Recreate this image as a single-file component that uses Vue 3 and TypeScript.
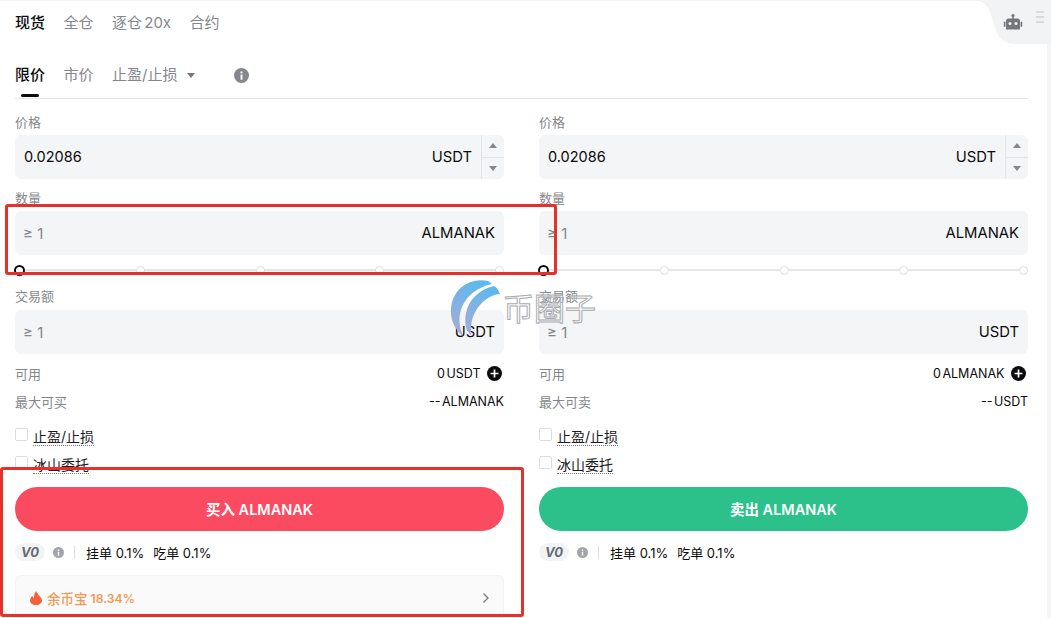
<script setup lang="ts">
interface Side {
  available: string
  maxLabel: string
  maxValue: string
  action: string
  kind: string
  earn: boolean
}

const sides: Side[] = [
  { available: '0 USDT', maxLabel: '最大可买', maxValue: '-- ALMANAK', action: '买入 ALMANAK', kind: 'buy', earn: true },
  { available: '0 ALMANAK', maxLabel: '最大可卖', maxValue: '-- USDT', action: '卖出 ALMANAK', kind: 'sell', earn: false },
]

const marginTabs = ['现货', '全仓', '逐仓 20x', '合约']
const sliderStops = [0, 1, 2, 3, 4]
</script>

<template>
  <div class="page">
    <div class="panel">
      <header class="top">
        <nav class="tabs">
          <span v-for="(tab, i) in marginTabs" :key="tab" class="tab" :class="{ active: i === 0 }">{{ tab }}</span>
        </nav>
        <div class="bot-tab">
          <svg class="bot-shape" width="81" height="44" viewBox="0 0 81 44">
            <path d="M0 0C10 0 16 2 20 12L25 28C28 38 34 44 46 44H81V0Z" fill="#f2f3f5" />
          </svg>
          <svg class="bot-icon" width="20" height="20" viewBox="0 0 20 20">
            <circle cx="10" cy="2.6" r="1.6" fill="#75777c" />
            <rect x="9.2" y="3" width="1.6" height="3" fill="#75777c" />
            <path d="M5.5 5.5h9a2.5 2.5 0 0 1 2.5 2.5v8.5H3V8a2.500 2.500 0 0 1 2.500-2.500Z" fill="#75777c" />
            <rect x="0.800" y="8.500" width="1.600" height="5.500" rx="0.800" fill="#75777c" />
            <rect x="17.600" y="8.500" width="1.600" height="5.500" rx="0.800" fill="#75777c" />
            <circle cx="7" cy="10.500" r="1.500" fill="#f2f3f5" />
            <circle cx="13" cy="10.500" r="1.500" fill="#f2f3f5" />
          </svg>
          <div class="menu-lines"><i></i><i></i><i></i></div>
        </div>
      </header>

      <div class="order-tabs">
        <span class="order-tab active">限价</span>
        <span class="order-tab">市价</span>
        <span class="order-tab">止盈/止损<i class="caret"></i></span>
        <svg class="order-info" width="15" height="15" viewBox="0 0 16 16">
          <circle cx="8" cy="8" r="8" fill="#85878c" />
          <rect x="7" y="7" width="2" height="5.500" fill="#fff" />
          <rect x="7" y="3.700" width="2" height="2" fill="#fff" />
        </svg>
      </div>

      <div class="columns">
        <section v-for="side in sides" :key="side.kind" class="column">
          <label class="field-label first">价格</label>
          <div class="input">
            <span class="value">0.02086</span>
            <span class="unit stepped">USDT</span>
            <div class="stepper">
              <span class="step"><i class="tri up"></i></span>
              <span class="step"><i class="tri down"></i></span>
            </div>
          </div>

          <label class="field-label">数量</label>
          <div class="input">
            <span class="placeholder">≥ 1</span>
            <span class="unit">ALMANAK</span>
          </div>

          <div class="slider">
            <span v-for="stop in sliderStops" :key="stop" class="stop" :class="{ current: stop === 0 }"></span>
          </div>

          <label class="field-label amount">交易额</label>
          <div class="input">
            <span class="placeholder">≥ 1</span>
            <span class="unit">USDT</span>
          </div>

          <div class="info-row available">
            <span>可用</span>
            <span class="info-value">
              {{ side.available }}
              <svg class="plus" width="15" height="15" viewBox="0 0 16 16">
                <circle cx="8" cy="8" r="8" fill="#0b0b0d" />
                <path d="M8 3.800v8.400M3.800 8h8.400" stroke="#fff" stroke-width="1.800" />
              </svg>
            </span>
          </div>
          <div class="info-row max">
            <span>{{ side.maxLabel }}</span>
            <span class="info-value">{{ side.maxValue }}</span>
          </div>

          <div class="check first-check"><i class="box"></i><span>止盈/止损</span></div>
          <div class="check"><i class="box"></i><span>冰山委托</span></div>

          <button class="action" :class="side.kind">{{ side.action }}</button>

          <div class="fees">
            <span class="level">V0</span>
            <svg class="fee-info" width="11" height="11" viewBox="0 0 16 16">
              <circle cx="8" cy="8" r="8" fill="#a3a5a9" />
              <rect x="7" y="7" width="2" height="5.500" fill="#fff" />
              <rect x="7" y="3.700" width="2" height="2" fill="#fff" />
            </svg>
            <i class="divider"></i>
            <span class="fee">挂单 0.1%</span>
            <span class="fee">吃单 0.1%</span>
          </div>

          <div v-if="side.earn" class="earn">
            <svg width="12" height="14" viewBox="0 0 12 14">
              <path d="M6.200 0C6.800 2.400 8.200 3.400 9.800 5.200 11.200 6.800 12 8 12 9.500 12 12 9.500 14 6 14S0 12 0 9.500C0 7.500 1.200 6 2.500 4.700 2.700 6 3.200 6.800 4 7.200 3.800 4.500 4.600 2 6.200 0Z" fill="#f4613c" />
            </svg>
            <span class="earn-name">余币宝</span>
            <span class="earn-rate">18.34%</span>
            <svg class="chevron" width="8" height="12" viewBox="0 0 8 12">
              <path d="M1.500 1.500 6 6l-4.500 4.500" fill="none" stroke="#75777c" stroke-width="1.300" />
            </svg>
          </div>
        </section>
      </div>
    </div>

    <div class="callout callout-amount"></div>
    <div class="callout callout-buy"></div>

    <div class="watermark">
      <svg width="52" height="58" viewBox="0 0 52 58">
        <defs>
          <linearGradient id="swoosh" x1="0.700" y1="0" x2="0.300" y2="1">
            <stop offset="0" stop-color="#5bb9ee" />
            <stop offset="1" stop-color="#a3acd8" />
          </linearGradient>
        </defs>
        <path d="M38 2C20-2 2 10 1 30 0 42 6 52 13 57 9 48 8 38 12 28 17 16 28 8 42 5Z" fill="url(#swoosh)" />
        <path d="M50 15C48 10 46 8 44 7 30 10 19 20 16 34 14 44 16 52 21 56 20 44 23 34 30 26 36 19 44 15 50 15Z" fill="url(#swoosh)" />
      </svg>
      <span class="watermark-text">币圈子</span>
    </div>
  </div>
</template>

<style>
html,
body {
  margin: 0;
  background: #f5f5f6;
}
</style>

<style scoped>
.page {
  position: relative;
  width: 1051px;
  height: 618px;
  overflow: hidden;
  background: #f5f5f6;
  font-family: Inter, "Noto Sans CJK SC", sans-serif;
  color: #0b0b0d;
}

.panel {
  width: 1047px;
  height: 618px;
  background: #fff;
  box-shadow: inset 0 1px 0 #f5f5f6;
}

.top {
  display: flex;
  justify-content: space-between;
  height: 44px;
  margin-right: -4px;
}

.tabs {
  display: flex;
  align-items: center;
  gap: 18.500px;
  padding: 0 0 2px 15px;
}

.tab {
  font-size: 15px;
  word-spacing: -2px;
  color: #85878c;
}

.tab.active {
  color: #0b0b0d;
  font-weight: 500;
}

.bot-tab {
  position: relative;
  width: 81px;
  height: 44px;
  flex: none;
}

.bot-shape {
  position: absolute;
  left: 0;
  top: 0;
}

.bot-icon {
  position: absolute;
  left: 33px;
  top: 13px;
}

.menu-lines {
  position: absolute;
  left: 66px;
  top: 11px;
  display: flex;
  flex-direction: column;
  gap: 3px;
}

.menu-lines i {
  display: block;
  width: 8px;
  height: 2px;
  background: #d8d9dc;
}

.order-tabs {
  display: flex;
  align-items: center;
  gap: 18.500px;
  margin: 0 19px 0 15px;
  height: 54px;
  border-bottom: 1px solid #e5e6e8;
}

.order-tab {
  position: relative;
  font-size: 15px;
  color: #85878c;
  line-height: 54px;
  height: 54px;
  top: 4px;
}

.order-tab.active {
  color: #0b0b0d;
  font-weight: 500;
}

.order-tab.active::after {
  content: "";
  position: absolute;
  left: 6px;
  top: 46px;
  width: 18px;
  height: 3px;
  border-radius: 2px;
  background: #0b0b0d;
}

.caret {
  display: inline-block;
  margin-left: 10px;
  vertical-align: 2px;
  border-left: 4px solid transparent;
  border-right: 4px solid transparent;
  border-top: 5px solid #75777c;
}

.order-info {
  margin: 8px 0 0 20px;
}

.columns {
  display: flex;
  gap: 35px;
  margin: 0 19px 0 15px;
}

.column {
  flex: 1;
  min-width: 0;
}

.field-label {
  display: block;
  height: 20px;
  margin-top: 9px;
  font-size: 13px;
  line-height: 20px;
  color: #85878c;
}

.field-label.first {
  margin-top: 13px;
}

.field-label.amount {
  margin-top: 11px;
}

.input {
  position: relative;
  display: flex;
  justify-content: space-between;
  align-items: center;
  height: 44px;
  padding: 0 9px;
  border-radius: 6px;
  background: #f4f5f6;
  font-size: 14px;
}

.field-label + .input {
  margin-top: 3px;
}

.field-label.amount + .input {
  margin-top: 4px;
}

.value {
  font-size: 14.500px;
  margin-top: -1px;
}

.placeholder {
  margin-left: -1px;
  color: #85878c;
  font-size: 15px;
}

.unit {
  font-size: 14.800px;
  margin-top: -1px;
}

.unit.stepped {
  margin-right: 23px;
}

.stepper {
  position: absolute;
  right: 0;
  top: 0;
  bottom: 0;
  width: 22px;
  display: flex;
  flex-direction: column;
  border-left: 1px solid #e3e4e6;
}

.step {
  flex: 1;
  display: flex;
  align-items: center;
  justify-content: center;
}

.step + .step {
  border-top: 1px solid #e3e4e6;
}

.tri {
  border-left: 4px solid transparent;
  border-right: 4px solid transparent;
}

.tri.up {
  border-bottom: 5px solid #85878c;
}

.tri.down {
  border-top: 5px solid #85878c;
}

.slider {
  display: flex;
  justify-content: space-between;
  align-items: center;
  height: 10px;
  margin-top: 10px;
  background: linear-gradient(#e5e6e8, #e5e6e8) center / 100% 2px no-repeat;
}

.stop {
  box-sizing: border-box;
  width: 9px;
  height: 9px;
  border: 1px solid #dedfe1;
  border-radius: 50%;
  background: #fff;
}

.stop.current {
  width: 11px;
  height: 11px;
  margin-left: -1px;
  border: 2px solid #0b0b0d;
}

.info-row {
  display: flex;
  justify-content: space-between;
  align-items: center;
  height: 20px;
  font-size: 13px;
  color: #85878c;
}

.info-row.available {
  margin-top: 9px;
}

.info-row.max {
  margin-top: 8px;
}

.info-value {
  display: flex;
  align-items: center;
  font-size: 12.500px;
  word-spacing: -2px;
  color: #0b0b0d;
  white-space: pre-wrap;
}

.plus {
  margin-left: 5px;
  margin-right: 2px;
}

.check {
  display: flex;
  align-items: center;
  gap: 5px;
  height: 20px;
  margin-top: 8px;
  font-size: 14px;
  color: #1c1c1f;
}

.check.first-check {
  margin-top: 16px;
}

.check span {
  border-bottom: 1px dotted #75777c;
  line-height: 17px;
}

.box {
  box-sizing: border-box;
  width: 13px;
  height: 13px;
  margin-top: -6px;
  border: 1px solid #dcdde0;
  border-radius: 2px;
}

.action {
  display: block;
  width: 100%;
  height: 44px;
  margin-top: 12px;
  padding: 0 0 2px;
  border: none;
  border-radius: 22px;
  font-family: inherit;
  font-size: 14.500px;
  font-weight: 600;
  color: #fff;
  cursor: pointer;
}

.action.buy {
  background: #fb4b61;
}

.action.sell {
  background: #2cc18a;
}

.fees {
  display: flex;
  align-items: center;
  height: 20px;
  margin-top: 11px;
  font-size: 13px;
}

.level {
  width: 30px;
  height: 18px;
  border-radius: 9px;
  background: #f2f3f5;
  color: #6a6c72;
  font-size: 13px;
  font-weight: 700;
  font-style: italic;
  line-height: 18px;
  text-align: center;
}

.fee-info {
  margin-left: 8px;
}

.divider {
  width: 1px;
  height: 13px;
  margin: 0 11px 0 10px;
  background: #dcdde0;
}

.fee + .fee {
  margin-left: 9px;
}

.earn {
  display: flex;
  align-items: center;
  gap: 5px;
  height: 44px;
  margin-top: 13px;
  padding: 0 14px 0 14px;
  border: 1px solid #f2f3f5;
  border-radius: 6px;
  background: #fafafa;
}

.earn-name {
  font-size: 13.500px;
  font-weight: 500;
  color: #f09a57;
}

.earn-rate {
  margin-left: -2px;
  font-size: 12.200px;
  font-weight: 600;
  color: #f09a57;
}

.chevron {
  margin-left: auto;
  margin-right: -1px;
}

.callout {
  position: absolute;
  box-sizing: border-box;
  border: 3px solid #e8302a;
  border-radius: 3px;
}

.callout-amount {
  left: 5px;
  top: 204px;
  width: 552px;
  height: 71px;
}

.callout-buy {
  left: 0;
  top: 467px;
  width: 524px;
  height: 150px;
}

.watermark {
  position: absolute;
  left: 450px;
  top: 279px;
  display: flex;
  align-items: center;
  gap: 1px;
}

.watermark-text {
  font-size: 31px;
  line-height: 34px;
  color: rgba(255, 255, 255, 0.45);
  -webkit-text-stroke: 1px #a9abb0;
  margin-top: 2px;
}
</style>
